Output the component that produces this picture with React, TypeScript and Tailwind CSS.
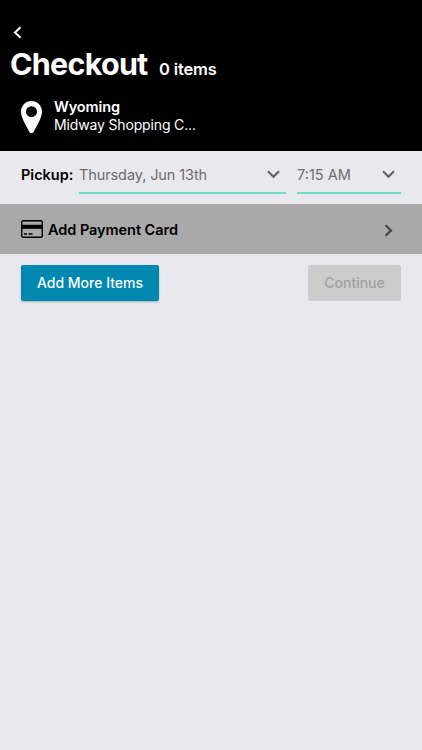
import type { ReactNode } from "react";

function PickupSelect({ value, className }: { value: string; className: string }) {
  return (
    <button type="button" className={`flex h-[38px] items-center justify-between border-b-2 border-[#6fdcc8] pr-[6px] text-left ${className}`}>
      <span className="whitespace-nowrap pt-px text-[14.5px] text-[#6c6c70]">{value}</span>
      <svg width="13" height="9" viewBox="0 0 13 9" fill="none" stroke="#5f5f64" strokeWidth="2">
        <path d="M1 1.3l5.5 5.5L12 1.3" />
      </svg>
    </button>
  );
}

function ActionButton({ children, className }: { children: ReactNode; className: string }) {
  return (
    <button type="button" className={`h-9 whitespace-nowrap rounded-[2px] pb-px text-[14px] font-medium ${className}`}>
      {children}
    </button>
  );
}

export default function App() {
  return (
    <main className="min-h-screen w-full bg-[#e9e8ee] font-['Inter',sans-serif] text-black">
      <header className="h-[151px] bg-black pt-[26px] text-white">
        <button type="button" aria-label="Back" className="ml-[13px] block">
          <svg width="9" height="13" viewBox="0 0 9 13" fill="none" stroke="white" strokeWidth="2">
            <path d="M7.5 1.3L2 6.5l5.5 5.2" />
          </svg>
        </button>
        <div className="ml-[10px] mt-[6px] flex items-baseline">
          <h1 className="w-[137px] text-[30.5px] font-bold leading-[38px] tracking-[-0.75px]">Checkout</h1>
          <span className="ml-3 text-[16.5px] font-semibold tracking-[-0.15px]">0 items</span>
        </div>
        <div className="ml-[21px] mt-[15px] flex">
          <svg width="21" height="32" viewBox="0 0 21 32" fill="white" className="mt-[3px]">
            <path
              fillRule="evenodd"
              d="M10.5 0C4.7 0 0 4.7 0 10.5c0 6.5 5.200 14 8.200 20.200 1 1.700 3.600 1.700 4.600 0C15.800 24.500 21 17 21 10.500 21 4.700 16.300 0 10.500 0zm0 5.200a5.500 5.500 0 1 1 0 11 5.500 5.500 0 0 1 0-11z"
            />
          </svg>
          <div className="ml-3 leading-[18px]">
            <p className="text-[14.5px] font-semibold leading-[18px] tracking-[-0.1px]">Wyoming</p>
            <p className="text-[14px] leading-[17px] tracking-[-0.15px]">Midway Shopping C...</p>
          </div>
        </div>
      </header>
      <section className="flex h-[53px] pl-[21px] pt-[5px]">
        <span className="w-[58px] text-[14.5px] font-semibold leading-[38px]">Pickup:</span>
        <PickupSelect value="Thursday, Jun 13th" className="w-[207px] tracking-[-0.1px]" />
        <PickupSelect value="7:15 AM" className="ml-[11px] w-[104px]" />
      </section>
      <button type="button" className="flex h-[50px] w-full items-center bg-[#a9a9a9] pl-[21px] pr-[29px]">
        <svg width="22" height="18" viewBox="0 0 22 18" fill="none" stroke="black" strokeWidth="1.4">
          <rect x=".7" y=".7" width="20.6" height="16.6" rx="1.5" />
          <path d="M1 6.8h20" strokeWidth="4" />
          <path d="M3 14h3m1.500 0h4" />
        </svg>
        <span className="ml-[5px] mt-px text-[14.5px] font-semibold tracking-[-0.05px]">Add Payment Card</span>
        <svg width="9" height="13" viewBox="0 0 9 13" fill="none" stroke="#444" strokeWidth="2.2" className="ml-auto mt-[3px]">
          <path d="M1.5 1.2L7 6.5l-5.500 5.300" />
        </svg>
      </button>
      <div className="flex justify-between px-[21px] pt-[11px]">
        <ActionButton className="w-[138px] bg-[#0089b0] text-white shadow-[0_1px_2px_rgba(0,0,0,0.25)]">Add More Items</ActionButton>
        <ActionButton className="w-[93px] bg-[#cccccc] text-[#a0a0a0]">Continue</ActionButton>
      </div>
    </main>
  );
}
